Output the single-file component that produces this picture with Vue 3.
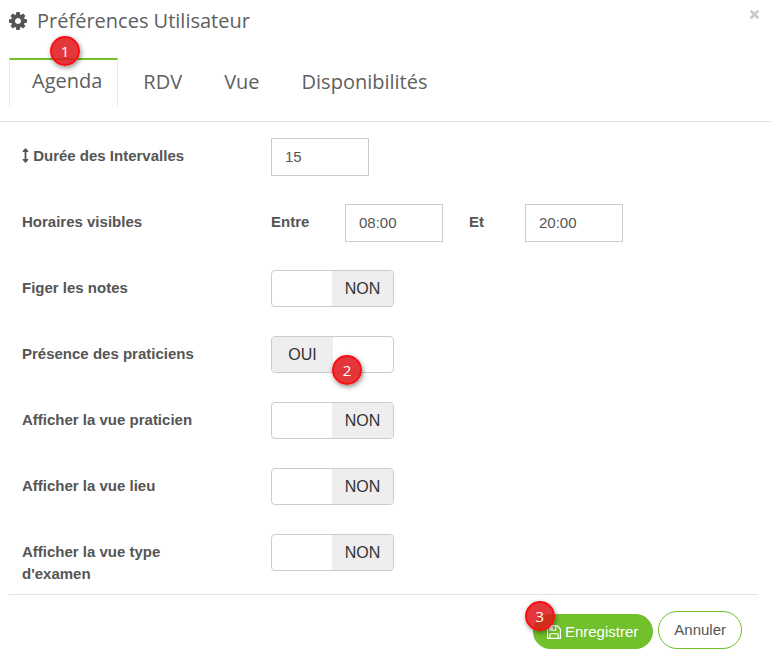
<script setup>
import { reactive, ref } from 'vue'

const tabs = ['Agenda', 'RDV', 'Vue', 'Disponibilités']
const activeTab = ref('Agenda')

const interval = ref('15')
const start = ref('08:00')
const end = ref('20:00')

const options = reactive([
  { id: 'figer-notes', label: 'Figer les notes', on: false },
  { id: 'presence-praticiens', label: 'Présence des praticiens', on: true, step: 2 },
  { id: 'vue-praticien', label: 'Afficher la vue praticien', on: false },
  { id: 'vue-lieu', label: 'Afficher la vue lieu', on: false },
  { id: 'vue-examen', label: "Afficher la vue type d'examen", on: false },
])
</script>

<template>
  <form class="dialog" @submit.prevent>
    <header class="head">
      <svg class="cog" viewBox="0 128 1536 1536" aria-hidden="true">
        <path d="M1024 896q0-106-75-181t-181-75-181 75-75 181 75 181 181 75 181-75 75-181zm512-109v222q0 12-8 23t-20 13l-185 28q-19 54-39 91 35 50 107 138 10 12 10 25t-9 23q-27 37-99 108t-94 71q-12 0-26-9l-138-108q-44 23-91 38-16 136-29 186-7 28-36 28h-222q-14 0-24.5-8.5t-11.5-21.5l-28-184q-49-16-90-37l-141 107q-10 9-25 9-14 0-25-11-126-114-165-168-7-10-7-23 0-12 8-23 15-21 51-66.5t54-70.5q-27-50-41-99l-183-27q-13-2-21-12.5t-8-23.5v-222q0-12 8-23t19-13l186-28q14-46 39-92-40-57-107-138-10-12-10-24 0-10 9-23 26-36 98.5-107.5t94.5-71.5q13 0 26 10l138 107q44-23 91-38 16-136 29-186 7-28 36-28h222q14 0 24.5 8.5t11.5 21.5l28 184q49 16 90 37l142-107q9-9 24-9 13 0 25 10 129 119 165 170 7 8 7 22 0 12-8 23-15 21-51 66.5t-54 70.5q26 50 41 98l183 28q13 2 21 12.5t8 23.5z" />
      </svg>
      <h1 class="title">Préférences Utilisateur</h1>
      <button type="button" class="close" aria-label="Fermer">
        <svg viewBox="0 0 10 10" aria-hidden="true"><path d="M1.5 1.5l7 7M8.5 1.5l-7 7" /></svg>
      </button>
    </header>

    <nav class="tabs">
      <button
        v-for="tab in tabs"
        :key="tab"
        type="button"
        class="tab"
        :class="{ active: tab === activeTab }"
        @click="activeTab = tab"
      >
        {{ tab }}
        <span v-if="tab === 'Agenda'" class="badge badge-tab">1</span>
      </button>
    </nav>

    <main class="body">
      <div class="row">
        <label class="name" for="interval">
          <svg class="arrows" viewBox="0 0 7 15" aria-hidden="true">
            <path d="M3.500 0L6.300 3V4H4.400V11H6.300V12L3.500 15L0.700 12V11H2.600V4H0.700V3Z" />
          </svg>
          Durée des Intervalles
        </label>
        <input id="interval" v-model="interval" class="field" type="text" />
      </div>

      <div class="row">
        <span class="name">Horaires visibles</span>
        <label class="word entre" for="start">Entre</label>
        <input id="start" v-model="start" class="field" type="text" />
        <label class="word et" for="end">Et</label>
        <input id="end" v-model="end" class="field" type="text" />
      </div>

      <div v-for="option in options" :key="option.id" class="row">
        <label class="name" :for="option.id">{{ option.label }}</label>
        <label class="switch" :class="{ on: option.on }">
          <input :id="option.id" v-model="option.on" type="checkbox" />
          <span class="state">{{ option.on ? 'OUI' : 'NON' }}</span>
          <span v-if="option.step" class="badge badge-switch">{{ option.step }}</span>
        </label>
      </div>
    </main>

    <footer class="foot">
      <button type="submit" class="btn save">
        <svg class="disk" viewBox="0 128 1536 1536" aria-hidden="true">
          <path d="M384 1536h768v-384h-768v384zm896 0h128v-896q0-14-10-38.500t-20-34.500l-281-281q-10-10-34-20t-39-10v416q0 40-28 68t-68 28h-576q-40 0-68-28t-28-68v-416h-128v1280h128v-416q0-40 28-68t68-28h832q40 0 68 28t28 68v416zm-384-928v-320q0-13-9.500-22.500t-22.500-9.500h-192q-13 0-22.500 9.500t-9.500 22.500v320q0 13 9.500 22.500t22.500 9.500h192q13 0 22.500-9.500t9.500-22.500zm640 32v928q0 40-28 68t-68 28h-1344q-40 0-68-28t-28-68v-1344q0-40 28-68t68-28h928q40 0 88 20t76 48l280 280q28 28 48 76t20 88z" />
        </svg>
        Enregistrer
        <span class="badge badge-save">3</span>
      </button>
      <button type="button" class="btn cancel">Annuler</button>
    </footer>
  </form>
</template>

<style>
body {
  margin: 0;
  background: #fff;
}
</style>

<style scoped>
.dialog,
.dialog * {
  box-sizing: border-box;
}
.dialog {
  color: #555;
  font-family: "Liberation Sans", Arial, sans-serif;
  font-size: 15px;
  line-height: 22px;
}
button,
input {
  margin: 0;
  color: inherit;
  font: inherit;
}
.head {
  display: flex;
  align-items: flex-start;
  gap: 10px;
  padding: 8px 11px 0 9px;
}
.cog {
  width: 18px;
  height: 18px;
  margin-top: 4px;
  fill: #555;
}
.title {
  flex: 1;
  margin: 0;
  color: #606060;
  font-family: "Open Sans", sans-serif;
  font-size: 20px;
  font-weight: 400;
  line-height: 26px;
}
.close {
  padding: 1px 0;
  border: 0;
  background: none;
}
.close svg {
  display: block;
  width: 11px;
  height: 11px;
  fill: none;
  stroke: #c8c8c8;
  stroke-width: 2.5;
}
.tabs {
  display: flex;
  padding: 24px 9px 15px;
  border-bottom: 1px solid #e2e2e2;
}
.tab {
  position: relative;
  height: 48px;
  padding: 0 20px 1px;
  border: 1px solid transparent;
  border-top-width: 2px;
  background: none;
  color: #606060;
  font-family: "Open Sans", sans-serif;
  font-size: 20px;
  font-weight: 400;
  line-height: 26px;
}
.tab.active {
  margin-right: 4px;
  padding: 0 15px 4px 22px;
  border-color: #72c02c #e8e8e8 transparent;
  border-bottom: 0;
}
.body {
  display: flex;
  flex-direction: column;
  gap: 28px;
  margin: 0 13px 0 9px;
  padding: 16px 0 9px 13px;
  border-bottom: 1px solid #e2e2e2;
}
.row {
  display: flex;
  align-items: flex-start;
  min-height: 38px;
}
.name {
  width: 249px;
  padding: 7px 64px 0 0;
  font-weight: 700;
}
.arrows {
  width: 7px;
  height: 15px;
  vertical-align: -2px;
  fill: #555;
}
.word {
  padding-top: 7px;
  font-weight: 700;
}
.entre {
  width: 74px;
}
.et {
  width: 82px;
  padding-left: 26px;
}
.field {
  width: 98px;
  height: 38px;
  padding: 0 13px 2px;
  border: 1px solid #ccc;
  border-radius: 0;
  background: #fff;
}
.switch {
  position: relative;
  display: flex;
  justify-content: flex-end;
  width: 123px;
  height: 37px;
  border: 1px solid #ccc;
  border-radius: 4px;
  background: #fff;
}
.switch.on {
  justify-content: flex-start;
}
.switch input {
  position: absolute;
  inset: 0;
  opacity: 0;
}
.state {
  width: 61px;
  border-radius: 0 3px 3px 0;
  background: #eee;
  color: #333;
  font-size: 16px;
  line-height: 35px;
  text-align: center;
}
.on .state {
  border-radius: 3px 0 0 3px;
}
.foot {
  display: flex;
  justify-content: flex-end;
  align-items: flex-end;
  gap: 5px;
  padding: 16px 29px 10px;
}
.btn {
  position: relative;
  border-radius: 19px;
  font-size: 15px;
}
.save {
  height: 35px;
  padding: 0 15px 0 14px;
  border: 0;
  background: #72c02c;
  color: #fff;
}
.disk {
  width: 14px;
  height: 14px;
  vertical-align: -2px;
  fill: #fff;
}
.cancel {
  height: 38px;
  padding: 0 15px;
  border: 1px solid #72c02c;
  background: #fff;
}
.badge {
  position: absolute;
  width: 30px;
  height: 30px;
  border: 2px solid #fb0d14;
  border-radius: 50%;
  background: rgba(222, 20, 25, 0.85);
  box-shadow: 1px 2px 5px rgba(0, 0, 0, 0.45);
  color: #fff;
  font-family: "Open Sans", sans-serif;
  font-size: 15px;
  font-weight: 400;
  line-height: 26px;
  text-align: center;
}
.badge-tab {
  top: -24px;
  left: 40px;
}
.badge-switch {
  top: 18px;
  left: 60px;
}
.badge-save {
  top: -13px;
  left: -8px;
}
</style>
